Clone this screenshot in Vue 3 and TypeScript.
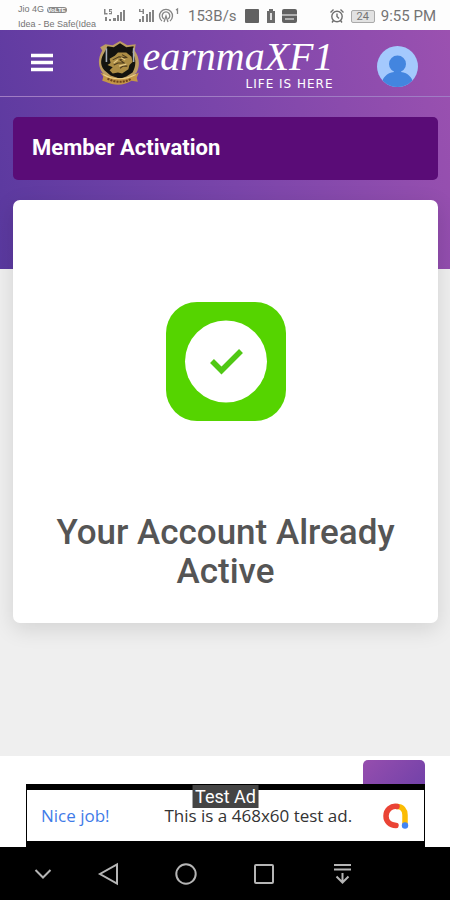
<script setup lang="ts">
import { ref } from 'vue'

const menuOpen = ref(false)
const brand = 'earnmaXF1'
const message = 'Your Account Already Active'
</script>

<template>
  <div class="screen">
    <div class="status">
      <div class="carriers">
        <span class="carrier">Jio 4G <b class="volte">VoLTE</b></span>
        <span class="carrier">Idea - Be Safe(Idea</span>
      </div>
      <svg class="signals" width="76" height="18" viewBox="0 0 76 18" aria-hidden="true">
        <g fill="#858585">
          <path d="M0 2h1.500v4h2v1.500H0zM5 2h3v1.300H6v1h2v3H5V6h2V5H5zM1 10h2v4H1zM5 12h2v2H5zM9 11h3v3H9zM13 8h2v6h-2zM16 5h2v9h-2zM19 3h2v11h-2z" />
          <path d="M35 2h1.500v2h2V2H40v5h-1.500V5H35zM35 12h2v3h-2zM38 9h2v6h-2zM42 7h2v8h-2zM45 5h2v10h-2zM48 3h2v12h-2z" />
        </g>
        <g fill="none" stroke="#858585" stroke-width="1.300">
          <path d="M58 14a6.500 6.500 0 1 1 8 0M60 12a3.800 3.800 0 1 1 4 0M72 3l1.500-1v5" />
          <path d="M60 15l2-6 2 6" />
        </g>
      </svg>
      <span class="speed">153B/s</span>
      <svg class="notices" width="54" height="18" viewBox="0 0 54 18" aria-hidden="true">
        <rect x="0" y="2" width="14" height="14" rx="1" fill="#626262" />
        <path d="M24 2h4v2h2v12h-8V4h2z" fill="#6b6b6b" />
        <path d="M25 6h2v7h-2z" fill="#ddd" />
        <rect x="37" y="2" width="15" height="14" rx="2" fill="#626262" />
        <path d="M37 8h15M40 12h9" stroke="#ccc" stroke-width="1.500" />
      </svg>
      <svg class="alarm" width="16" height="16" viewBox="0 0 16 16" fill="none" stroke="#6f6f6f" stroke-width="1.400" aria-hidden="true">
        <circle cx="8" cy="8.500" r="5.200" />
        <path d="M8 5.500v3l2 2M1.500 4.500l3-3M14.500 4.500l-3-3M4.500 12.500L3 14.500M11.500 12.500l1.500 2" />
      </svg>
      <span class="battery">24</span>
      <span class="clock">9:55 PM</span>
    </div>

    <main class="page">
      <header class="topbar">
        <button class="menu" type="button" aria-label="Menu" :aria-expanded="menuOpen" @click="menuOpen = !menuOpen">
          <svg width="24" height="20" viewBox="0 0 24 20" aria-hidden="true">
            <path d="M1 2.500h22M1 9.500h22M1 16.500h22" stroke="#fff" stroke-width="3.500" />
          </svg>
        </button>
        <a class="logo" href="#">
          <svg class="crest" width="45" height="46" viewBox="0 0 43 44" aria-hidden="true">
            <path d="M8 4l7 1 7-4 7 4 8-1-1 6c5 7 5 15 2 21l-6 5-11 3-12-4C2 30-1 20 5 10L3 7z" fill="#bd9d62" />
            <path d="M10 6l6 1 6-4 6 4 7-1-1 6c4 7 3 14 0 19l-6 4-6 2-9-3-6-5C2 23 4 17 7 12z" fill="#14130f" />
            <path d="M9 8v13M35 8v13" stroke="#a7adb8" stroke-width="1.500" />
            <path d="M12 18l5-3 3-3 8 0 5 4 1 5-3 3-1 4-6 4-4-1-5 1-3-3 3-3-5-2 3-2z" fill="#ad8d45" />
            <path d="M15 19l6-3 6 1-5 2 4 3-6 0-4 2M22 27l3-2 4 0M24 14l5 3" fill="none" stroke="#4b3a1c" stroke-width="1" />
            <path d="M16 22l4-3M23 17l4 2M21 25l7-2" stroke="#e3c681" stroke-width="1.200" />
            <path d="M3 31l8 3c9 4 17 3 25-1l4-2-2 5 1 4-6-1c-8 5-16 5-25 1l-3-1 1-4z" fill="#c59648" />
            <path d="M10 37c8 4 16 4 23 0" fill="none" stroke="#6e421a" stroke-width="2" stroke-dasharray="2 1" />
            <path d="M6 33c10 6 22 5 31 0" fill="none" stroke="#ecd08b" stroke-width="1" />
          </svg>
          <span class="wordmark">
            <span class="name">{{ brand }}</span>
            <span class="tagline">LIFE IS HERE</span>
          </span>
        </a>
        <button class="avatar" type="button" aria-label="Profile">
          <svg width="41" height="41" viewBox="0 0 41 41" aria-hidden="true">
            <defs><clipPath id="disc"><circle cx="20.500" cy="20.500" r="20.500" /></clipPath></defs>
            <g clip-path="url(#disc)">
              <path d="M0 0h41v41H0z" fill="#a4c9fd" />
              <path d="M4 41c1-10 6-14 13-15v-3h7v3c7 1 12 5 13 15z" fill="#4385df" />
              <circle cx="20.500" cy="18" r="8.500" fill="#4385df" />
            </g>
          </svg>
        </button>
      </header>

      <div class="content">
        <h1 class="title">Member Activation</h1>
        <section class="card">
          <svg class="check" width="120" height="119" viewBox="0 0 120 119" role="img" aria-label="Active">
            <rect width="120" height="119" rx="31" fill="#55d400" />
            <circle cx="60" cy="59.500" r="41" fill="#fff" />
            <path d="M46 59l9.500 9.500L75 49" fill="none" stroke="#50c814" stroke-width="5.500" />
          </svg>
          <h2 class="message">{{ message }}</h2>
        </section>
      </div>
    </main>

    <footer class="footer">
      <button class="to-top" type="button" aria-label="Back to top"></button>
      <aside class="ad">
        <span class="ad-badge">Test Ad</span>
        <a class="ad-body" href="#">
          <span class="praise">Nice job!</span>
          <span class="ad-text">This is a 468x60 test ad.</span>
          <svg width="28" height="28" viewBox="0 0 28 28" fill="none" stroke-width="5.500" stroke-linecap="round" aria-hidden="true">
            <path d="M15 4.500c5 0 8 3.500 8 8.500v9" stroke="#fbbc04" />
            <path d="M15 4.500C9 3.500 4 8 4 14c0 5.500 4 9 10 9.500" stroke="#ea4335" />
            <circle cx="23" cy="23.500" r="3.200" fill="#4285f4" />
          </svg>
        </a>
      </aside>
    </footer>

    <nav class="keys" aria-label="System">
      <button type="button" aria-label="Hide">
        <svg width="20" height="20" viewBox="0 0 20 20"><path d="M2.500 6l7.500 7.500L17.500 6" /></svg>
      </button>
      <button type="button" aria-label="Back">
        <svg width="24" height="24" viewBox="0 0 24 24"><path d="M21 2.500v19L4 12z" /></svg>
      </button>
      <button type="button" aria-label="Home">
        <svg width="24" height="24" viewBox="0 0 24 24"><circle cx="12" cy="12" r="9.700" /></svg>
      </button>
      <button type="button" aria-label="Recent apps">
        <svg width="24" height="24" viewBox="0 0 24 24"><rect x="3" y="3" width="18" height="18" rx="1" /></svg>
      </button>
      <button type="button" aria-label="Notifications">
        <svg width="24" height="24" viewBox="0 0 24 24"><path d="M4 3h17M4 7.500h17M12.500 11v10M6.500 14.500l6 6 6-6" /></svg>
      </button>
    </nav>
  </div>
</template>

<style>
body {
  margin: 0;
}
</style>

<style scoped>
.screen {
  display: flex;
  flex-direction: column;
  min-height: 100vh;
  font-family: Roboto, "Liberation Sans", sans-serif;
  background: #fff;
}

button {
  display: flex;
  align-items: center;
  justify-content: center;
  padding: 0;
  border: 0;
  background: none;
  cursor: pointer;
}

a {
  color: inherit;
  text-decoration: none;
}

.status {
  display: flex;
  align-items: center;
  box-sizing: border-box;
  height: 30px;
  padding: 2px 14px 0 18px;
  color: #747474;
  background: #fdfdfd;
  white-space: nowrap;
}

.carriers {
  display: flex;
  flex-direction: column;
  width: 86px;
}

.carrier {
  font: 9px/14px "Liberation Sans", sans-serif;
}

.volte {
  padding: 0 1px;
  border-radius: 3px;
  font-size: 6px;
  color: #fff;
  background: #888;
}

.speed {
  margin-left: 8px;
  font-size: 15px;
}

.notices {
  margin-left: 8px;
}

.alarm {
  margin-left: auto;
}

.battery {
  width: 22px;
  margin: 0 6px;
  border: 1px solid #aaa;
  border-radius: 2px;
  font-size: 11px;
  line-height: 11px;
  text-align: center;
  background: #e2e2e2;
}

.clock {
  font-size: 15px;
}

.page {
  flex: 1;
  background: linear-gradient(75deg, #5a399f 0%, #7a45aa 50%, #9b51b0 100%) no-repeat 0 0 / 100% 239px, #efefef;
}

.topbar {
  display: flex;
  align-items: center;
  justify-content: space-between;
  box-sizing: border-box;
  height: 67px;
  padding: 0 32px 0 30px;
  border-bottom: 1px solid #a07cc4;
}

.logo {
  display: flex;
  align-items: center;
  color: #fff;
}

.wordmark {
  display: flex;
  flex-direction: column;
  align-items: flex-end;
}

.name {
  font: italic 40px/42px "Liberation Serif", serif;
}

.tagline {
  font: 12px/12px "DejaVu Sans", sans-serif;
  letter-spacing: 1px;
}

.avatar {
  margin-top: 6px;
  border-radius: 50%;
}

.content {
  display: flex;
  flex-direction: column;
  gap: 20px;
  padding: 20px 12px 133px 13px;
}

.title {
  box-sizing: border-box;
  height: 63px;
  margin: 0;
  padding: 16px 19px;
  border-radius: 5px;
  font-size: 22px;
  font-weight: 700;
  line-height: 29px;
  color: #fff;
  background: #5a0c77;
}

.card {
  display: flex;
  flex-direction: column;
  align-items: center;
  gap: 92px;
  padding: 102px 36px 32px;
  border-radius: 7px;
  background: #fff;
  box-shadow: 0 6px 22px rgba(0, 0, 0, 0.12);
}

.message {
  margin: 0;
  font-size: 35px;
  font-weight: 500;
  line-height: 39px;
  text-align: center;
  color: #555;
}

.footer {
  display: flex;
  flex-direction: column;
  padding: 4px 25px 0 26px;
  background: #fff;
}

.to-top {
  align-self: flex-end;
  width: 62px;
  height: 24px;
  border-radius: 5px 5px 0 0;
  background: linear-gradient(135deg, #964eae, #7342a9);
}

.ad {
  position: relative;
  padding: 6px 1px;
  background: #000;
}

.ad-body {
  display: flex;
  align-items: center;
  justify-content: space-between;
  height: 51px;
  padding: 0 14px;
  font-family: "Open Sans", "Noto Sans", sans-serif;
  background: #fff;
}

.praise {
  font-size: 17px;
  font-weight: 500;
  color: #3f7be8;
}

.ad-text {
  margin-left: 25px;
  font-size: 17px;
  color: #333;
}

.ad-badge {
  position: absolute;
  top: 1px;
  left: 50%;
  padding: 0 3px;
  font-size: 18px;
  line-height: 23px;
  color: #fff;
  background: #444;
  transform: translateX(-50%);
}

.keys {
  display: grid;
  grid-template-columns: 52fr repeat(4, 78fr);
  align-items: center;
  height: 53px;
  padding: 0 69px 0 17px;
  background: #000;
}

.keys svg {
  fill: none;
  stroke: #b5b5b5;
  stroke-width: 2;
}
</style>
